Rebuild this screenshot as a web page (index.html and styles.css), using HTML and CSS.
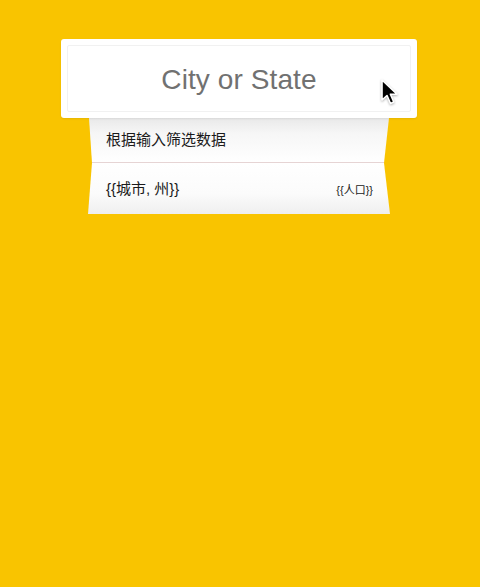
FILE: index.html
```html
<!DOCTYPE html>
<html lang="zh">
<head>
<meta charset="utf-8">
<title>City or State</title>
<link rel="stylesheet" href="styles.css">
</head>
<body>
<div class="search">
  <div class="input-box">
    <div class="input-inner">
      <span class="placeholder">City or State</span>
    </div>
    <svg class="cursor" width="20" height="28" viewBox="0 0 20 28">
      <path d="M2 1 L2 21 L7 16.5 L10.5 24.5 L13.8 23 L10.4 15.2 L17 15.2 Z" fill="#000" stroke="#fff" stroke-width="1.6" stroke-linejoin="round"/>
    </svg>
  </div>
  <ul class="suggestions">
    <li class="row row-top"><span class="label">根据输入筛选数据</span></li>
    <li class="row row-bottom"><span class="label">{{城市, 州}}</span><span class="pop">{{人口}}</span></li>
  </ul>
</div>
</body>
</html>
```
FILE: styles.css
```css
html, body {
  margin: 0;
  padding: 0;
  background: #f9c400;
  height: 100%;
}
body {
  font-family: "Liberation Sans", "Noto Sans CJK SC", sans-serif;
}
.search {
  width: 356px;
  margin: 39px 0 0 61px;
  display: flex;
  flex-direction: column;
  align-items: center;
}
.input-box {
  position: relative;
  width: 356px;
  height: 79px;
  box-sizing: border-box;
  background: #fff;
  border-radius: 3px;
  padding: 6px;
  box-shadow: 0 1px 2px rgba(0,0,0,0.08);
  z-index: 2;
}
.input-inner {
  height: 100%;
  box-sizing: border-box;
  border: 1px solid #f1f1f1;
  border-radius: 2px;
  display: flex;
  align-items: center;
  justify-content: center;
}
.placeholder {
  font-size: 28px;
  color: #717171;
  letter-spacing: 0.1px;
  padding-top: 2px;
}
.cursor {
  position: absolute;
  left: 319px;
  top: 40px;
  filter: drop-shadow(0 1px 1px rgba(0,0,0,0.3));
}
.suggestions {
  list-style: none;
  margin: 0;
  padding: 0;
  width: 304px;
  margin-left: 2px;
  display: flex;
  flex-direction: column;
}
.row {
  display: flex;
  align-items: center;
  justify-content: space-between;
  box-sizing: border-box;
  padding: 0 18px 0 18px;
  color: #1a1a1a;
}
.row-top {
  height: 45px;
  background: linear-gradient(to bottom, #e9e9e9 0%, #f6f6f6 35%, #fff 100%);
  clip-path: polygon(1px 0, 301px 0, 296px 100%, 4px 100%);
  border-bottom: 1px solid #e6d4d4;
}
.row-bottom {
  height: 51px;
  background: linear-gradient(to bottom, #fff 0%, #fbfbfb 60%, #efefef 100%);
  clip-path: polygon(4px 0, 296px 0, 302px 100%, 0 100%);
  padding-right: 19px;
}
.label {
  font-size: 15px;
  line-height: 18px;
}
.pop {
  font-size: 11px;
  color: #222;
}
```
